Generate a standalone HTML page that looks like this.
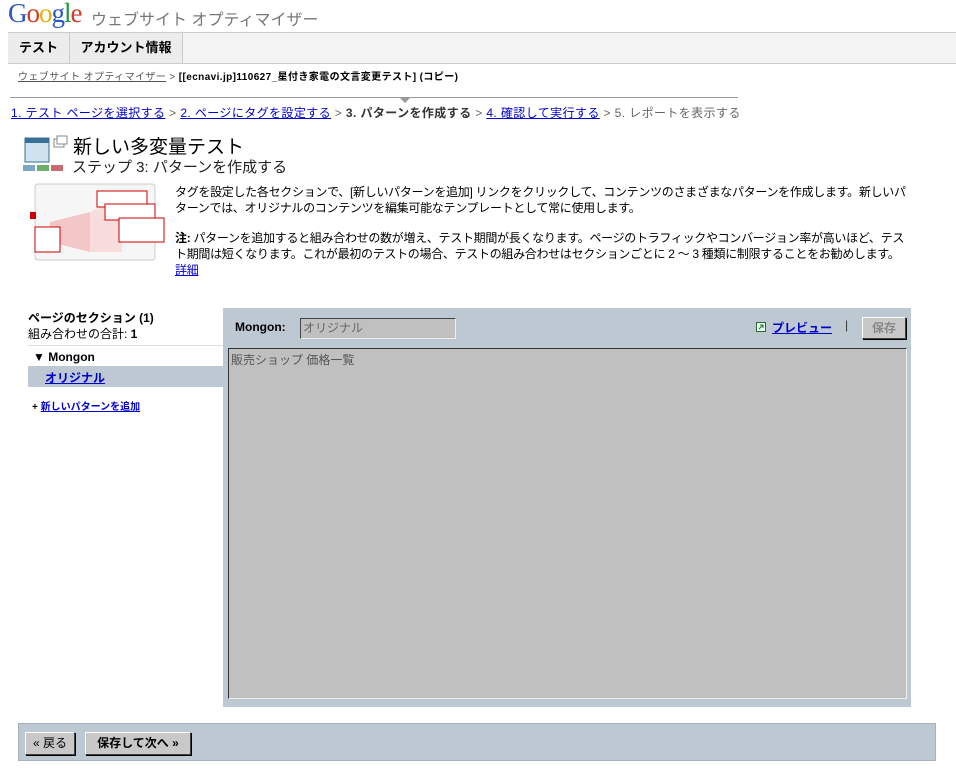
<!DOCTYPE html>
<html><head><meta charset="utf-8"><style>
body{margin:0;width:956px;height:781px;background:#fff;font-family:"Liberation Sans","Noto Sans CJK JP",sans-serif;position:relative;overflow:hidden;color:#000}
.a{position:absolute;white-space:nowrap}
a{color:#0000cc;text-decoration:underline}
.btn{position:absolute;background:#c8c8c8;border:1px solid;border-color:#fff #404040 #404040 #fff;box-shadow:1px 1px 0 #000;font-size:12px;font-weight:bold;text-align:center;box-sizing:border-box}
</style></head><body>
<div class="a" style="left:8px;top:-2px;font-family:'Liberation Serif',serif;font-size:27px;letter-spacing:-1px"><span style="color:#2a55c6">G</span><span style="color:#d23a2a">o</span><span style="color:#e6b10f">o</span><span style="color:#2a55c6">g</span><span style="color:#1a9a3a">l</span><span style="color:#d23a2a">e</span></div>
<div class="a" style="left:91px;top:6px;font-size:16px;color:#777">ウェブサイト オプティマイザー</div>
<div class="a" style="left:8px;top:32px;width:948px;height:30px;background:#f3f3f3;border-top:1px solid #ccc;border-bottom:1px solid #ccc"></div>
<div class="a" style="left:8px;top:33px;width:61px;height:30px;border-right:1px solid #ccc;background:#ececec;font-size:13px;font-weight:bold;line-height:30px;text-align:center">テスト</div>
<div class="a" style="left:70px;top:33px;width:112px;height:30px;border-right:1px solid #ccc;background:#ececec;font-size:13px;font-weight:bold;line-height:30px;text-align:center">アカウント情報</div>
<div class="a" style="left:18px;top:68px;font-size:10px;color:#555;letter-spacing:0.4px"><a style="color:#555">ウェブサイト オプティマイザー</a> &gt; <b style="color:#000">[[ecnavi.jp]110627_星付き家電の文言変更テスト] (コピー)</b></div>
<div class="a" style="left:10px;top:97px;width:728px;height:1px;background:#999"></div>
<div class="a" style="left:400px;top:98px;width:0;height:0;border-left:5px solid transparent;border-right:5px solid transparent;border-top:5px solid #999"></div>
<div class="a" style="left:11px;top:104px;font-size:12px;color:#666;letter-spacing:0.4px"><a>1. テスト ページを選択する</a> &gt; <a>2. ページにタグを設定する</a> &gt; <b style="color:#333">3. パターンを作成する</b> &gt; <a>4. 確認して実行する</a> &gt; 5. レポートを表示する</div>
<svg class="a" style="left:22px;top:135px" width="48" height="38"><rect x="3" y="3" width="24" height="24" fill="#cfe3ee" stroke="#3a6f9a"/><rect x="3" y="3" width="24" height="5" fill="#3a6f9a"/><rect x="1" y="30" width="12" height="6" fill="#7aa8c0"/><rect x="15" y="30" width="12" height="6" fill="#6ab06a"/><rect x="29" y="30" width="12" height="6" fill="#c86a72"/><rect x="32" y="4" width="10" height="8" fill="#fff" stroke="#888"/><rect x="35" y="1" width="10" height="8" fill="#fff" stroke="#888"/></svg>
<div class="a" style="left:73px;top:132px;font-size:19px">新しい多変量テスト</div>
<div class="a" style="left:72px;top:156px;font-size:15px;color:#222">ステップ 3: パターンを作成する</div>
<svg class="a" style="left:30px;top:182px" width="135" height="82"><rect x="5" y="2" width="120" height="76" rx="3" fill="#f6f6f6" stroke="#ccc"/><polygon points="20,40 60,30 60,70 20,60" fill="#f3c7c7"/><polygon points="60,30 92,15 92,70 60,70" fill="#f9dcdc"/><rect x="67" y="9" width="50" height="16" fill="#fff" stroke="#c00"/><rect x="75" y="22" width="50" height="16" fill="#fff" stroke="#c00"/><rect x="89" y="36" width="45" height="24" fill="#fff" stroke="#c00"/><rect x="0" y="30" width="6" height="7" fill="#c00"/><rect x="5" y="45" width="25" height="25" fill="#fff" stroke="#c00"/></svg>
<div class="a" style="left:175px;top:184px;font-size:12px;line-height:16px;white-space:normal;width:733px;letter-spacing:-0.3px">タグを設定した各セクションで、[新しいパターンを追加] リンクをクリックして、コンテンツのさまざまなパターンを作成します。新しいパターンでは、オリジナルのコンテンツを編集可能なテンプレートとして常に使用します。</div>
<div class="a" style="left:175px;top:230px;font-size:12px;line-height:16px;white-space:normal;width:733px;letter-spacing:-0.3px"><b>注:</b> パターンを追加すると組み合わせの数が増え、テスト期間が長くなります。ページのトラフィックやコンバージョン率が高いほど、テスト期間は短くなります。これが最初のテストの場合、テストの組み合わせはセクションごとに 2 ～ 3 種類に制限することをお勧めします。<a>詳細</a></div>
<div class="a" style="left:28px;top:309px;font-size:12px;font-weight:bold">ページのセクション (1)</div>
<div class="a" style="left:28px;top:325px;font-size:12px">組み合わせの合計: <b>1</b></div>
<div class="a" style="left:28px;top:345px;width:195px;height:1px;background:#ddd"></div>
<div class="a" style="left:33px;top:350px;font-size:12px;font-weight:bold">▼ Mongon</div>
<div class="a" style="left:28px;top:366px;width:195px;height:21px;background:#bdc8d3"></div>
<div class="a" style="left:45px;top:369px;font-size:12px;font-weight:bold"><a>オリジナル</a></div>
<div class="a" style="left:32px;top:398px;font-size:10px;font-weight:bold">+ <a>新しいパターンを追加</a></div>
<div class="a" style="left:223px;top:308px;width:688px;height:399px;background:#bdc8d3"></div>
<div class="a" style="left:235px;top:320px;font-size:12px;font-weight:bold">Mongon:</div>
<div class="a" style="left:300px;top:318px;width:152px;height:19px;background:#c0c0c0;border:1px solid;border-color:#444 #eee #eee #444;font-size:12px;color:#666;line-height:19px;padding-left:2px;box-sizing:content-box">オリジナル</div>
<svg class="a" style="left:756px;top:322px" width="11" height="11"><rect x="0.5" y="0.5" width="9" height="9" fill="#dfe" stroke="#363"/><path d="M3 7L7 3M4 3H7V6" stroke="#363" fill="none"/></svg>
<div class="a" style="left:772px;top:319px;font-size:12px;font-weight:bold"><a>プレビュー</a></div>
<div class="a" style="left:845px;top:318px;font-size:12px;color:#333">|</div>
<div class="btn" style="left:862px;top:317px;width:44px;height:22px;line-height:20px;color:#888">保存</div>
<div class="a" style="left:228px;top:348px;background:#c0c0c0;border:1px solid;border-color:#333 #eee #eee #333;font-size:12px;color:#555;padding:2px;box-sizing:border-box;width:679px;height:351px">販売ショップ 価格一覧</div>
<div class="a" style="left:18px;top:723px;width:918px;height:38px;background:#bdc8d3;border:1px solid #a8b2bc;box-sizing:border-box"></div>
<div class="btn" style="left:25px;top:732px;width:50px;height:23px;line-height:21px;font-weight:normal">« 戻る</div>
<div class="btn" style="left:85px;top:732px;width:106px;height:23px;line-height:21px">保存して次へ »</div>
</body></html>
